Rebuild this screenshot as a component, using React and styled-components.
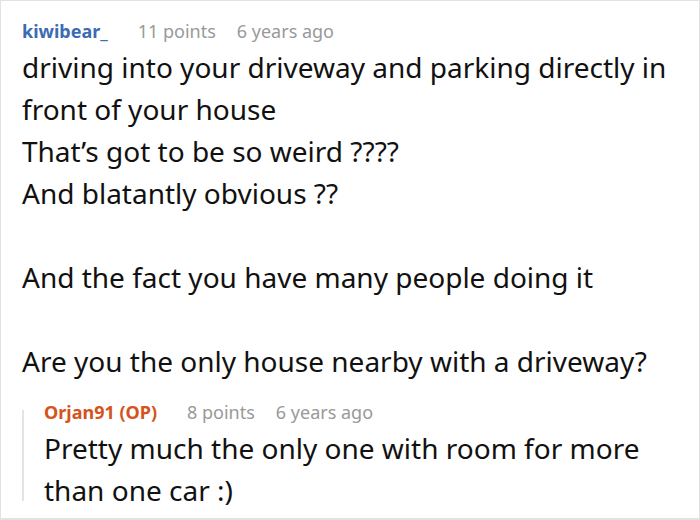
import React from 'react'
import styled, { createGlobalStyle } from 'styled-components'

const Global = createGlobalStyle`
    body {
        margin: 0;
        background: #ffffff;
        font-family: "Noto Sans", "Open Sans", sans-serif;
    }
`

const Card = styled.div`
    width: 700px;
    height: 520px;
    box-sizing: border-box;
    border: 1px solid #e2e2e2;
    border-bottom-width: 2px;
    padding: 16px 21px 0 21px;
    overflow: hidden;
`

const Meta = styled.div`
    display: flex;
    align-items: baseline;
    font-size: 18px;
    line-height: 28px;
    margin-bottom: 1px;
`

const Author = styled.span`
    font-weight: 700;
    color: ${props => props.$op ? '#d4541c' : '#3b6bb5'};
    margin-right: 30px;
`

const Points = styled.span`
    color: #999999;
    margin-right: 21px;
`

const Time = styled.span`
    color: #999999;
`

const Body = styled.div`
    font-size: 28px;
    line-height: 42px;
    color: #111111;
`

const Line = styled.p`
    margin: 0;
    min-height: 42px;
`

const Reply = styled.div`
    position: relative;
    margin-top: 16px;
    padding-left: 22px;

    &::before {
        content: '';
        position: absolute;
        left: 0;
        top: 12px;
        bottom: 10px;
        width: 2px;
        background: #e4e4e4;
    }
`

function Comment({ author, op, points, time, lines }) {
    return (
        <div>
            <Meta>
                <Author $op={op}>{author}</Author>
                <Points>{points}</Points>
                <Time>{time}</Time>
            </Meta>
            <Body>
                {lines.map((l, i) => <Line key={i}>{l}</Line>)}
            </Body>
        </div>
    )
}

export default function App() {
    return (
        <Card>
            <Global />
            <Comment
                author="kiwibear_"
                points="11 points"
                time="6 years ago"
                lines={[
                    'driving into your driveway and parking directly in',
                    'front of your house',
                    'That’s got to be so weird ????',
                    'And blatantly obvious ??',
                    '',
                    'And the fact you have many people doing it',
                    '',
                    'Are you the only house nearby with a driveway?',
                ]}
            />
            <Reply>
                <Comment
                    author="Orjan91 (OP)"
                    op
                    points="8 points"
                    time="6 years ago"
                    lines={[
                        'Pretty much the only one with room for more',
                        'than one car :)',
                    ]}
                />
            </Reply>
        </Card>
    )
}
